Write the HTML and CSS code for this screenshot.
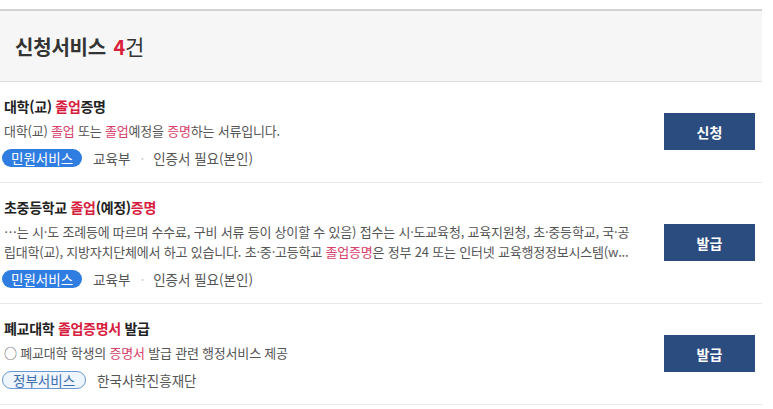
FILE: index.html
```html
<!DOCTYPE html>
<html lang="ko">
<head>
<meta charset="utf-8">
<link rel="stylesheet" href="styles.css">
</head>
<body>
<div class="wrap">
  <div class="head">
    <h2 class="head-title">신청서비스 <em>4</em><span class="unit">건</span></h2>
  </div>
  <ul class="list">
    <li class="item">
      <div class="info">
        <div class="title">대학(교) <span class="hl">졸업</span>증명</div>
        <div class="desc">대학(교) <span class="hl">졸업</span> 또는 <span class="hl">졸업</span>예정을 <span class="hl">증명</span>하는 서류입니다.</div>
        <div class="tags"><span class="badge fill">민원서비스</span><span class="meta">교육부</span><span class="dot">·</span><span class="meta">인증서 필요(본인)</span></div>
      </div>
      <button class="btn">신청</button>
    </li>
    <li class="item">
      <div class="info">
        <div class="title">초중등학교 <span class="hl">졸업</span>(예정)<span class="hl">증명</span></div>
        <div class="desc two"><span class="line">…는 시·도 조례등에 따르며 수수료, 구비 서류 등이 상이할 수 있음) 접수는 시·도교육청, 교육지원청, 초·중등학교, 국·공</span><span class="line">립대학(교), 지방자치단체에서 하고 있습니다. 초·중·고등학교 <span class="hl">졸업증명</span>은 정부 24 또는 인터넷 교육행정정보시스템(w...</span></div>
        <div class="tags"><span class="badge fill">민원서비스</span><span class="meta">교육부</span><span class="dot">·</span><span class="meta">인증서 필요(본인)</span></div>
      </div>
      <button class="btn">발급</button>
    </li>
    <li class="item">
      <div class="info">
        <div class="title">폐교대학 <span class="hl">졸업증명서</span> 발급</div>
        <div class="desc">○ 폐교대학 학생의 <span class="hl">증명서</span> 발급 관련 행정서비스 제공</div>
        <div class="tags"><span class="badge line-badge">정부서비스</span><span class="meta">한국사학진흥재단</span></div>
      </div>
      <button class="btn">발급</button>
    </li>
  </ul>
</div>
</body>
</html>
```

FILE: styles.css
```css
* { box-sizing: border-box; }
html, body { margin: 0; padding: 0; background: #fff; }
body {
  font-family: "Noto Sans CJK KR", "Noto Sans", sans-serif;
  color: #222;
}
.wrap {
  width: 762px;
  padding-top: 9px;
}
.head {
  border-top: 2px solid #d2d2d2;
  border-bottom: 1px solid #dcdcdc;
  background: #f6f6f6;
  height: 73px;
  display: flex;
  align-items: center;
  padding-left: 15px;
}
.head-title {
  margin: 0;
  font-size: 20px;
  font-weight: 700;
  color: #333;
  letter-spacing: -0.2px;
  line-height: 24px;
}
.head-title em {
  font-style: normal;
  color: #d81f3c;
  margin-left: 2px;
}
.head-title .unit {
  font-weight: 400;
  font-size: 21px;
}
.list {
  list-style: none;
  margin: 0;
  padding: 0;
}
.item {
  display: flex;
  align-items: center;
  border-bottom: 1px solid #e8e8e8;
  padding: 14px 7px 15px 4px;
}
.info {
  flex: 1;
  min-width: 0;
}
.title {
  font-size: 14px;
  font-weight: 700;
  line-height: 20px;
  color: #222;
  letter-spacing: -0.3px;
  margin-bottom: 5px;
}
.hl { color: #d6203e; }
.desc .hl { color: #d6406a; }
.desc {
  font-size: 13px;
  line-height: 20px;
  color: #555;
  letter-spacing: -0.2px;
}
.desc.two .line {
  display: block;
  white-space: nowrap;
  overflow: hidden;
}
.tags {
  margin-top: 8px;
  display: flex;
  align-items: center;
  height: 18px;
  font-size: 13.5px;
  color: #555;
}
.badge {
  display: inline-flex;
  align-items: center;
  justify-content: center;
  height: 18px;
  padding: 0 9px;
  border-radius: 9px;
  font-size: 13.5px;
  margin-left: -2px;
}
.badge.fill {
  background: #2f7de1;
  color: #fff;
}
.badge.line-badge {
  background: #eef5fc;
  color: #3d6fae;
  border: 1px solid #6a97cf;
  padding: 0 10px;
}
.meta {
  margin-left: 11px;
}
.dot {
  color: #ccc;
  margin-left: 10px;
  margin-right: -2px;
}
.btn {
  flex: none;
  width: 91px;
  height: 37px;
  margin-left: 24px;
  border: 0;
  background: #2b4c7f;
  color: #fff;
  font-family: inherit;
  font-size: 14px;
  font-weight: 700;
  cursor: pointer;
}
```
